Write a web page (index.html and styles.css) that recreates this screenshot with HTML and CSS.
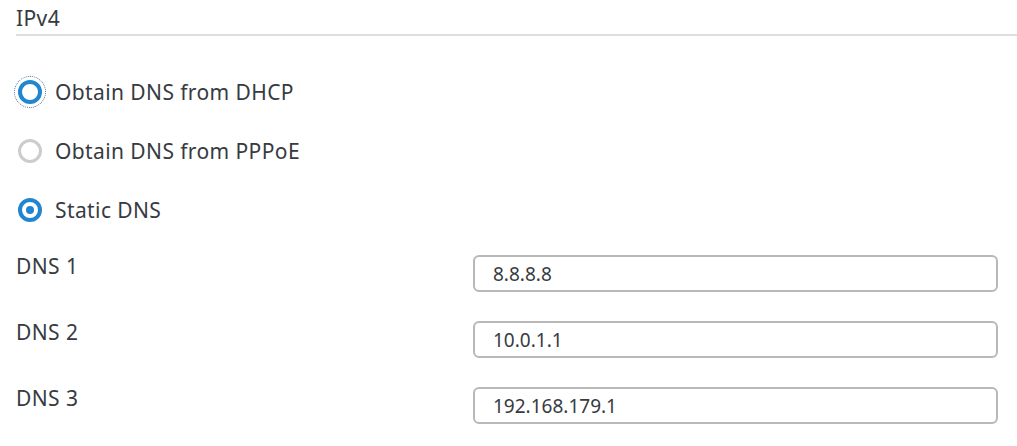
FILE: index.html
```html
<!DOCTYPE html>
<html lang="en">
<head>
  <meta charset="UTF-8" />
  <title>DNS settings</title>
  <link rel="stylesheet" href="styles.css">
</head>
<body>
  <div class="section">
    <div class="section-title">IPv4</div>

    <div class="radio-list">
      <label class="radio-row">
        <input type="radio" name="dnsmode" class="radio focused">
        <span>Obtain DNS from DHCP</span>
      </label>
      <label class="radio-row">
        <input type="radio" name="dnsmode" class="radio">
        <span>Obtain DNS from PPPoE</span>
      </label>
      <label class="radio-row">
        <input type="radio" name="dnsmode" class="radio" checked>
        <span>Static DNS</span>
      </label>
    </div>

    <div class="dns-list">
      <div class="dns-row">
        <label for="dns1">DNS 1</label>
        <input id="dns1" type="text" value="8.8.8.8">
      </div>
      <div class="dns-row">
        <label for="dns2">DNS 2</label>
        <input id="dns2" type="text" value="10.0.1.1">
      </div>
      <div class="dns-row">
        <label for="dns3">DNS 3</label>
        <input id="dns3" type="text" value="192.168.179.1">
      </div>
    </div>
  </div>
</body>
</html>
```

FILE: styles.css
```css
body, html {
  margin: 0;
  padding: 0;
  background: #ffffff;
  font-family: 'Noto Sans', 'Open Sans', sans-serif;
  font-size: 21px;
  letter-spacing: 0.4px;
  color: #363b42;
}

.section {
  padding-left: 16px;
}

.section-title {
  padding-top: 5px;
  line-height: 26px;
  height: 29px;
  border-bottom: 2px solid #dedede;
}

.radio-list {
  display: flex;
  flex-direction: column;
  gap: 35px;
  margin-top: 44px;
}

.radio-row {
  display: flex;
  align-items: center;
  gap: 13px;
  height: 24px;
  line-height: 24px;
}

.radio {
  appearance: none;
  -webkit-appearance: none;
  margin: 0 0 0 2px;
  width: 24px;
  height: 24px;
  border-radius: 50%;
  border: 3px solid #cccccc;
  background: #fff;
  box-sizing: border-box;
  position: relative;
  flex-shrink: 0;
}

.radio.focused {
  border: 4px solid #2285cf;
  outline: 1px dotted #4a6fa0;
  outline-offset: 3px;
}

.radio:checked {
  border: 4px solid #2285cf;
}

.radio:checked::after {
  content: "";
  position: absolute;
  left: 4px;
  top: 4px;
  width: 8px;
  height: 8px;
  border-radius: 50%;
  background: #2285cf;
}

.dns-list {
  display: flex;
  flex-direction: column;
  gap: 29px;
  margin-top: 33px;
  padding-right: 19px;
}

.dns-row {
  display: grid;
  grid-template-columns: 457px 1fr;
  align-items: start;
}

.dns-row label {
  line-height: 22px;
}

.dns-row input {
  height: 37px;
  box-sizing: border-box;
  border: 2px solid #b8b8b8;
  border-radius: 6px;
  padding: 0 18px;
  font-family: inherit;
  font-size: 19px;
  letter-spacing: 0;
  color: #363b42;
  outline: none;
}
```
